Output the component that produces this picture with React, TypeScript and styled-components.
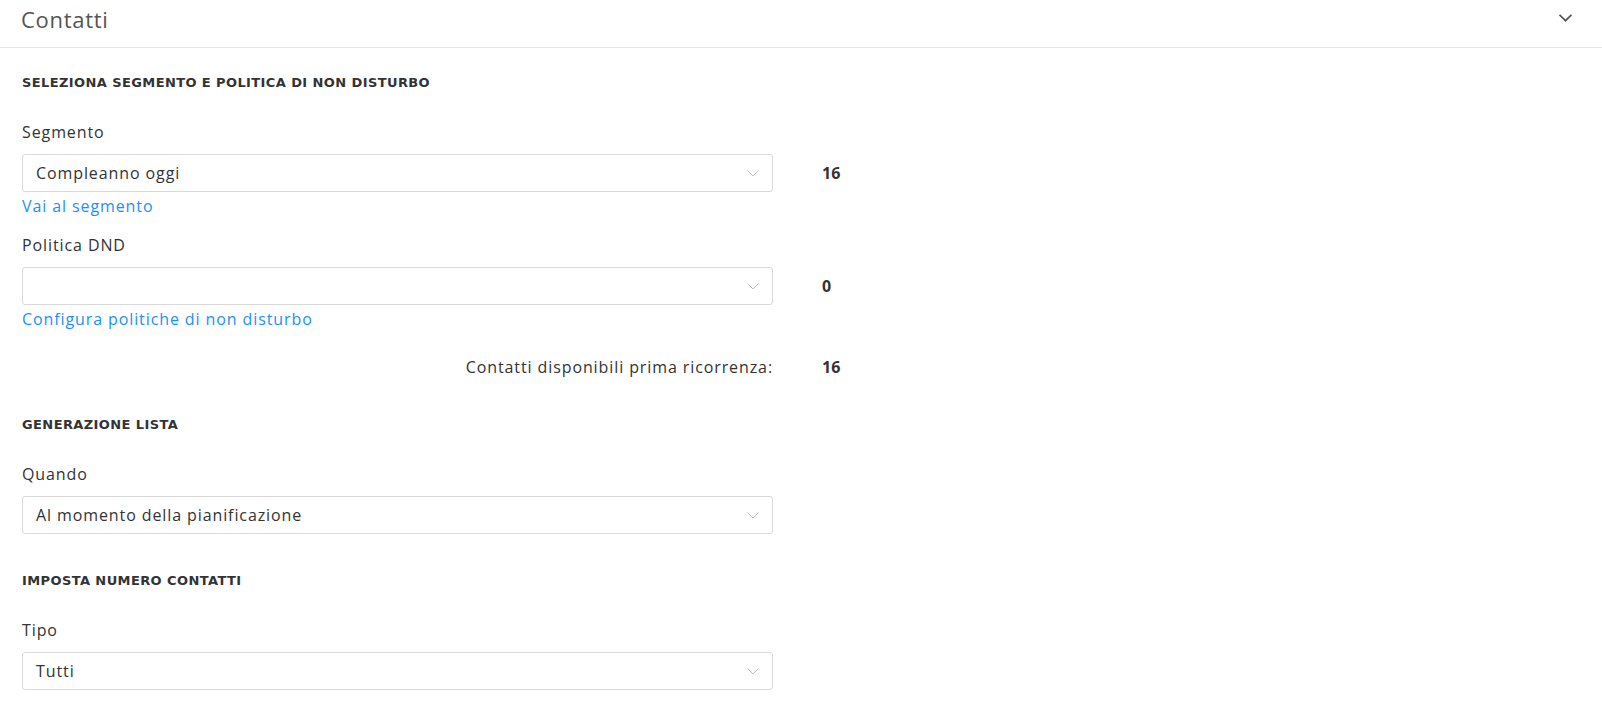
import styled, { createGlobalStyle } from "styled-components";

const GlobalStyle = createGlobalStyle`
  body {
    margin: 0;
    background: #ffffff;
    font-family: "Open Sans", "DejaVu Sans", sans-serif;
    color: #333333;
  }
`;

const Panel = styled.div`
  width: 100%;
  background: #ffffff;
`;

const PanelHeader = styled.div`
  display: flex;
  align-items: center;
  justify-content: space-between;
  height: 48px;
  padding: 0 29px 9px 21px;
  box-sizing: border-box;
  border-bottom: 1px solid #e8e8e8;
`;

const PanelTitle = styled.h2`
  margin: 0;
  font-size: 22px;
  font-weight: 400;
  letter-spacing: 0.7px;
  color: #555555;
  line-height: 28px;
`;

const Collapse = styled.button`
  border: none;
  background: none;
  padding: 0;
  width: 14px;
  height: 10px;
  display: flex;
  cursor: pointer;
`;

const Body = styled.div`
  padding: 26px 22px 30px;
`;

const Section = styled.section`
  & + & {
    margin-top: 38px;
  }
`;

const SectionTitle = styled.h3`
  margin: 0 0 29px;
  font-family: "DejaVu Sans", "Open Sans", sans-serif;
  font-size: 13px;
  line-height: 18px;
  font-weight: 700;
  letter-spacing: 0.4px;
  text-transform: uppercase;
  color: #333333;
`;

const Field = styled.div`
  & + & {
    margin-top: 17px;
  }
`;

const Label = styled.div`
  font-size: 16px;
  line-height: 22px;
  letter-spacing: 0.9px;
  margin-bottom: 11px;
  color: #333333;
`;

const SelectRow = styled.div`
  display: flex;
  align-items: center;
`;

const SelectBox = styled.div`
  width: 751px;
  height: 38px;
  box-sizing: border-box;
  border: 1px solid #d9d9d9;
  border-radius: 3px;
  display: flex;
  align-items: center;
  justify-content: space-between;
  padding: 0 13px;
  font-size: 16px;
  letter-spacing: 0.9px;
  color: #333333;
  cursor: pointer;
`;

const Count = styled.div`
  margin-left: 49px;
  font-size: 16px;
  font-weight: 700;
  color: #333333;
`;

const FieldLink = styled.a`
  display: inline-block;
  margin-top: 3px;
  font-size: 16px;
  line-height: 22px;
  letter-spacing: 0.9px;
  color: #1e90f5;
  text-decoration: none;
  cursor: pointer;
`;

const SummaryRow = styled.div`
  display: flex;
  align-items: center;
  margin-top: 26px;
  line-height: 22px;
`;

const SummaryLabel = styled.div`
  width: 751px;
  text-align: right;
  font-size: 16px;
  letter-spacing: 0.9px;
  color: #333333;
`;

const Chevron = ({ color, w = 12, h = 7, sw = 1 }: { color: string; w?: number; h?: number; sw?: number }) => (
  <svg width={w} height={h} viewBox="0 0 12 7" fill="none">
    <path d="M0.5 0.5 L6 6 L11.5 0.5" stroke={color} strokeWidth={sw} />
  </svg>
);

const Select: React.FC<{ value?: string }> = ({ value }) => (
  <SelectBox>
    <span>{value}</span>
    <Chevron color="#bfbfbf" />
  </SelectBox>
);

export default function App() {
  return (
    <>
      <GlobalStyle />
      <Panel>
        <PanelHeader>
          <PanelTitle>Contatti</PanelTitle>
          <Collapse aria-label="Comprimi">
            <Chevron color="#595959" w={13} h={8} sw={1.6} />
          </Collapse>
        </PanelHeader>
        <Body>
          <Section>
            <SectionTitle>Seleziona segmento e politica di non disturbo</SectionTitle>
            <Field>
              <Label>Segmento</Label>
              <SelectRow>
                <Select value="Compleanno oggi" />
                <Count>16</Count>
              </SelectRow>
              <FieldLink>Vai al segmento</FieldLink>
            </Field>
            <Field>
              <Label>Politica DND</Label>
              <SelectRow>
                <Select />
                <Count>0</Count>
              </SelectRow>
              <FieldLink>Configura politiche di non disturbo</FieldLink>
            </Field>
            <SummaryRow>
              <SummaryLabel>Contatti disponibili prima ricorrenza:</SummaryLabel>
              <Count>16</Count>
            </SummaryRow>
          </Section>
          <Section>
            <SectionTitle>Generazione lista</SectionTitle>
            <Field>
              <Label>Quando</Label>
              <SelectRow>
                <Select value="Al momento della pianificazione" />
              </SelectRow>
            </Field>
          </Section>
          <Section>
            <SectionTitle>Imposta numero contatti</SectionTitle>
            <Field>
              <Label>Tipo</Label>
              <SelectRow>
                <Select value="Tutti" />
              </SelectRow>
            </Field>
          </Section>
        </Body>
      </Panel>
    </>
  );
}
